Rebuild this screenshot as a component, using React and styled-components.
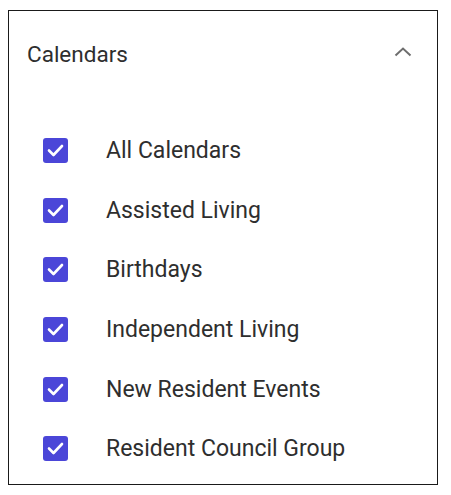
import React, { useState } from "react";
import styled, { createGlobalStyle } from "styled-components";

const GlobalStyle = createGlobalStyle`
  body {
    margin: 0;
    background: #ffffff;
    font-family: Roboto, "Liberation Sans", sans-serif;
  }
`;

const calendars = [
  "All Calendars",
  "Assisted Living",
  "Birthdays",
  "Independent Living",
  "New Resident Events",
  "Resident Council Group",
];

function App() {
  const [open, setOpen] = useState(true);
  const [checked, setChecked] = useState(calendars.map(() => true));

  const toggle = (idx) => {
    setChecked(checked.map((c, i) => (i === idx ? !c : c)));
  };

  return (
    <>
      <GlobalStyle />
      <Panel>
        <Header onClick={() => setOpen(!open)}>
          <Title>Calendars</Title>
          <Chevron width="18" height="10" viewBox="0 0 18 10" open={open}>
            <polyline points="1.5,8.5 9,1.5 16.5,8.5" />
          </Chevron>
        </Header>
        {open && (
          <List>
            {calendars.map((name, i) => (
              <Row key={name} onClick={() => toggle(i)}>
                <Box checked={checked[i]}>
                  {checked[i] && (
                    <svg width="17" height="13" viewBox="0 0 17 13">
                      <polyline points="2,6.5 6.5,11 15,2" />
                    </svg>
                  )}
                </Box>
                <Label>{name}</Label>
              </Row>
            ))}
          </List>
        )}
      </Panel>
    </>
  );
}

const Panel = styled.div`
  box-sizing: border-box;
  margin: 10px 0 0 8px;
  width: 430px;
  height: 475px;
  border: 1.5px solid #1a1a1a;
  background: #fff;
`;

const Header = styled.div`
  display: flex;
  align-items: center;
  justify-content: space-between;
  height: 86px;
  padding: 0 25px 0 18px;
  cursor: pointer;
`;

const Title = styled.span`
  font-size: 22.5px;
  color: #2e2e2e;
`;

const Chevron = styled.svg`
  margin-top: -4px;
  fill: none;
  stroke: #6e6e6e;
  stroke-width: 2;
  transform: ${(p) => (p.open ? "none" : "rotate(180deg)")};
`;

const List = styled.div`
  display: flex;
  flex-direction: column;
  padding-top: 24px;
`;

const Row = styled.div`
  display: flex;
  align-items: center;
  height: 59.6px;
  padding-left: 34px;
  gap: 38px;
  cursor: pointer;
`;

const Box = styled.div`
  width: 25px;
  height: 25px;
  border-radius: 3px;
  display: flex;
  align-items: center;
  justify-content: center;
  background: ${(p) => (p.checked ? "#4b46d8" : "#fff")};
  border: ${(p) => (p.checked ? "none" : "2px solid #777")};
  box-sizing: border-box;

  svg {
    fill: none;
    stroke: #fff;
    stroke-width: 2.6;
    stroke-linecap: round;
    stroke-linejoin: round;
  }
`;

const Label = styled.span`
  font-size: 23px;
  color: #2e2e2e;
`;

export default App;
